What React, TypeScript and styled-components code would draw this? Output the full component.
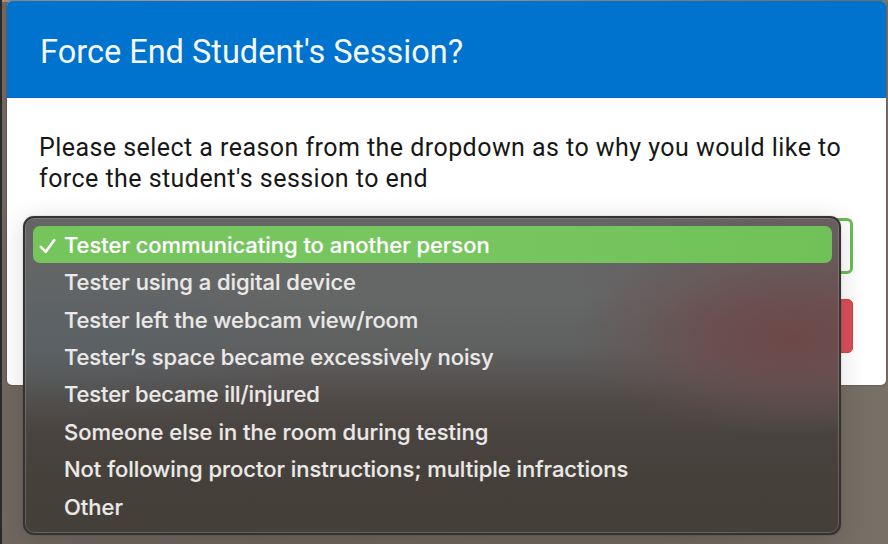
import React from "react";
import styled, { createGlobalStyle } from "styled-components";

const GlobalStyle = createGlobalStyle`
  *, *::before, *::after { box-sizing: border-box; }
  html, body { margin: 0; height: 100%; overflow: hidden; }
`;

const Backdrop = styled.div`
  width: 888px;
  height: 544px;
  overflow: hidden;
  padding: 1px 2.5px 0 5px;
  border-left: 2px solid #2b2a2b;
  background:
    linear-gradient(90deg, #a09289 0, #c0aaa2 200px, #a8988f 500px, #81746c 888px) 0 0 / 100% 2px no-repeat,
    linear-gradient(90deg, #716761 0, #6d645d 300px, #71685e 700px, #777066 880px);
  font-family: Roboto, sans-serif;
`;

const Dialog = styled.section`
  position: relative;
  height: 384px;
  border-radius: 5px;
  background: #fff;
  box-shadow: 0 0 2px rgba(20, 15, 10, 0.45);
`;

const Header = styled.header`
  display: flex;
  align-items: center;
  height: 97px;
  padding: 6px 33px 0;
  border-radius: 5px 5px 0 0;
  border-bottom: 1px solid #0868c6;
  background: #0073cf;
`;

const Title = styled.h1`
  margin: 0;
  color: #f4f8fd;
  font-size: 32.5px;
  font-weight: 400;
  line-height: 40px;
  letter-spacing: 0;
  white-space: nowrap;
`;

const Body = styled.div`
  display: flex;
  flex-direction: column;
  padding: 34px 32.5px 0 20px;
`;

const Message = styled.p`
  margin: 0 0 24px 12px;
  color: #171717;
  font-size: 25px;
  line-height: 31px;
  letter-spacing: 0.45px;
  white-space: nowrap;
`;

const Select = styled.div`
  height: 56px;
  border: 3px solid #6dbb57;
  border-radius: 6px;
`;

const EndButton = styled.div`
  height: 54px;
  margin-top: 25px;
  border: 1px solid #e03d45;
  border-radius: 5px;
  background: #d9505a;
`;

const Menu = styled.ul`
  position: absolute;
  top: 215px;
  left: 16px;
  display: flex;
  flex-direction: column;
  width: 818px;
  height: 319px;
  margin: 0;
  padding: 8px 7px 8px 8px;
  list-style: none;
  border: 2px solid #353332;
  border-radius: 11px;
  background:
    radial-gradient(ellipse 215px 100px at 765px 119px, rgba(109, 72, 70, 0.95), rgba(108, 75, 76, 0.82) 35%, rgba(106, 79, 80, 0.35) 70%, rgba(106, 80, 80, 0) 100%),
    radial-gradient(ellipse 300px 150px at 850px 60px, rgba(108, 86, 88, 0.8), rgba(108, 86, 88, 0)),
    radial-gradient(ellipse 260px 90px at 30px 120px, rgba(88, 97, 103, 0.65), rgba(88, 97, 103, 0)),
    linear-gradient(180deg, #646565 0, #656666 80px, #5f6060 130px, #585655 155px, #504b48 180px, #49443f 215px, #45403a 260px, #453f39 100%);
  box-shadow: inset 0 0 0 1px rgba(170, 165, 160, 0.34), 0 0 1px rgba(0, 0, 0, 0.5), 0 4px 26px rgba(0, 0, 0, 0.15);
`;

const Option = styled.li<{ $selected?: boolean }>`
  display: flex;
  flex: none;
  align-items: center;
  height: 37.45px;
  padding-left: 6px;
  border-radius: 7px;
  color: ${(p) => (p.$selected ? "#ffffff" : "#eae9e8")};
  background: ${(p) => (p.$selected ? "linear-gradient(100deg, #75c45c, #78c660 50%, #70c158)" : "transparent")};
`;

const CheckSlot = styled.span`
  display: flex;
  flex: none;
  width: 25px;
  height: 20px;
`;

const Label = styled.span<{ $spacing: number }>`
  font-family: Inter, sans-serif;
  font-size: 22px;
  font-weight: 500;
  line-height: 30px;
  letter-spacing: ${(p) => p.$spacing}px;
  white-space: nowrap;
  -webkit-text-stroke: 0.15px currentColor;
`;

const options = [
  { text: "Tester communicating to another person", spacing: -0.04 },
  { text: "Tester using a digital device", spacing: -0.05 },
  { text: "Tester left the webcam view/room", spacing: -0.1 },
  { text: "Tester’s space became excessively noisy", spacing: -0.1 },
  { text: "Tester became ill/injured", spacing: -0.14 },
  { text: "Someone else in the room during testing", spacing: 0 },
  { text: "Not following proctor instructions; multiple infractions", spacing: -0.03 },
  { text: "Other", spacing: 0 },
];

const Check = () => (
  <svg width="20" height="20" viewBox="0 0 20 20" fill="none" stroke="#fff" strokeWidth="2.6" strokeLinecap="round" strokeLinejoin="round">
    <path d="M1.8 11.8 L6.8 16.8 L15.3 5" />
  </svg>
);

export default function App() {
  return (
    <>
      <GlobalStyle />
      <Backdrop>
        <Dialog>
          <Header>
            <Title>Force End Student's Session?</Title>
          </Header>
          <Body>
            <Message>
              Please select a reason from the dropdown as to why you would like to
              <br />
              force the student's session to end
            </Message>
            <Select />
            <EndButton />
          </Body>
          <Menu>
            {options.map((o, i) => (
              <Option key={o.text} $selected={i === 0}>
                <CheckSlot>{i === 0 && <Check />}</CheckSlot>
                <Label $spacing={o.spacing}>{o.text}</Label>
              </Option>
            ))}
          </Menu>
        </Dialog>
      </Backdrop>
    </>
  );
}
